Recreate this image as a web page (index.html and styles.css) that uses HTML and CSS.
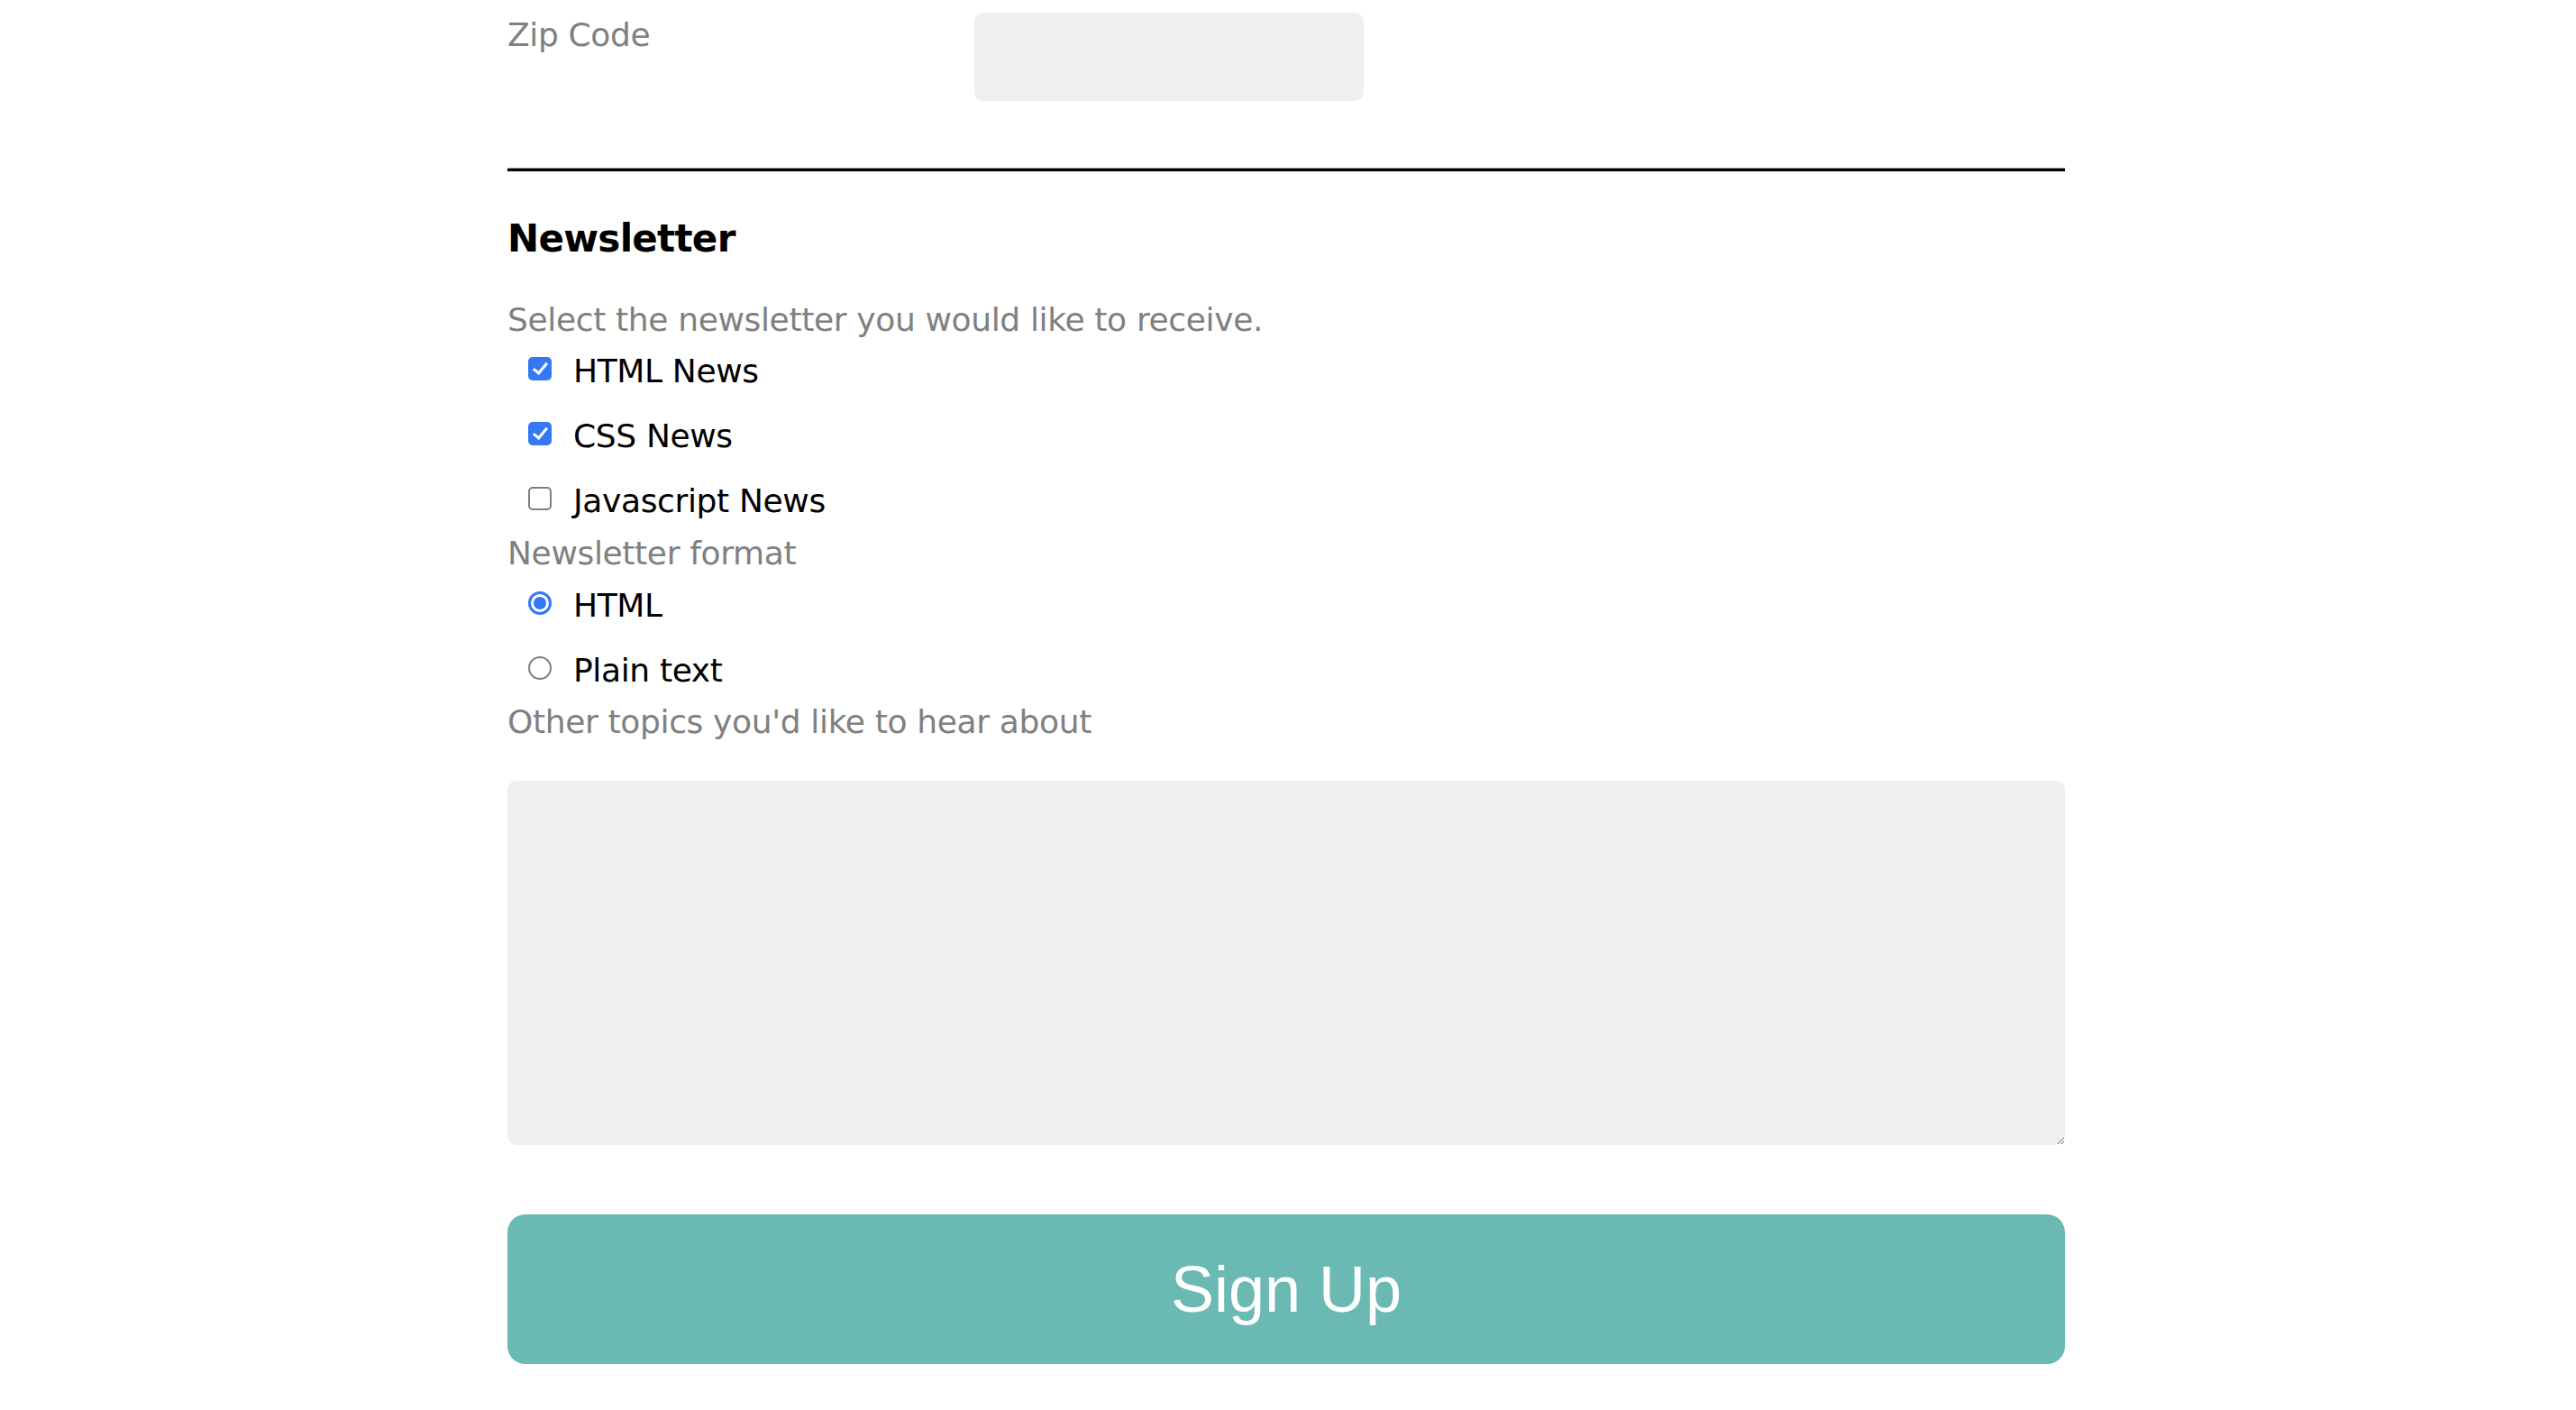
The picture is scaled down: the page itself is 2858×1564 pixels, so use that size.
FILE: index.html
```html
<!DOCTYPE html>
<html lang="en">
<head>
<meta charset="utf-8">
<title>Newsletter Sign Up</title>
<link rel="stylesheet" href="styles.css">
</head>
<body>
<form class="form">
  <div class="zip-row">
    <label class="field-label zip-label" for="zip">Zip Code</label>
    <input class="text-input" type="text" id="zip" name="zip">
  </div>
  <hr class="divider">
  <h3 class="section-title">Newsletter</h3>
  <p class="field-label select-label">Select the newsletter you would like to receive.</p>
  <div class="options">
    <label class="option"><input class="check" type="checkbox" checked><span>HTML News</span></label>
    <label class="option"><input class="check" type="checkbox" checked><span>CSS News</span></label>
    <label class="option"><input class="check" type="checkbox"><span>Javascript News</span></label>
  </div>
  <p class="field-label format-label">Newsletter format</p>
  <div class="options radios">
    <label class="option"><input class="radio" type="radio" name="format" checked><span>HTML</span></label>
    <label class="option"><input class="radio" type="radio" name="format"><span>Plain text</span></label>
  </div>
  <label class="field-label topics-label" for="topics">Other topics you'd like to hear about</label>
  <textarea class="topics" id="topics"></textarea>
  <button class="submit" type="button">Sign Up</button>
</form>
</body>
</html>
```
FILE: styles.css
```css
html, body {
  margin: 0;
  padding: 0;
  background: #ffffff;
}

body {
  font-family: "DejaVu Sans", Verdana, sans-serif;
  font-size: 36px;
  line-height: 42px;
  letter-spacing: -0.35px;
  color: #000;
  padding-right: 4px;
}

.form {
  width: 1728px;
  margin: 0 auto;
  padding-top: 14px;
  display: flex;
  flex-direction: column;
  padding-bottom: 60px;
}

.field-label {
  color: #808080;
  margin: 0;
  display: block;
}

.zip-row {
  display: flex;
  align-items: flex-start;
}

.zip-label {
  width: 518px;
  margin-top: 4px;
  flex: none;
}

.text-input {
  width: 432px;
  height: 98px;
  box-sizing: border-box;
  border: none;
  border-radius: 10px;
  background: #eeeff1;
  padding: 0 16px;
  font: inherit;
  margin: 0;
}

.divider {
  margin: 74px 0 0;
  border: 0;
  border-top: 1px solid #9a9a9a;
  border-bottom: 1px solid #ececec;
  height: 3px;
  background: #000;
  width: 100%;
}

.section-title {
  margin: 49px 0 0;
  font-size: 42px;
  line-height: 49px;
  font-weight: bold;
  letter-spacing: -0.7px;
}

.select-label {
  margin-top: 45px;
}

.options {
  display: flex;
  flex-direction: column;
  gap: 30px;
  margin-top: 15px;
}

.radios {
  margin-top: 16px;
}

.format-label {
  margin-top: 16px;
}

.topics-label {
  margin-top: 15px;
}

.option {
  display: flex;
  align-items: flex-start;
  height: 42px;
}

.check,
.radio {
  appearance: none;
  -webkit-appearance: none;
  width: 26px;
  height: 26px;
  margin: 5px 24px 0 23px;
  box-sizing: border-box;
  flex: none;
  position: relative;
  background: #fff;
}

.check {
  border: 2px solid #7f7f7f;
  border-radius: 5px;
}

.check:checked {
  border: none;
  background: #3478f6;
}

.check:checked::after {
  content: "";
  position: absolute;
  left: 9px;
  top: 3px;
  width: 6px;
  height: 13px;
  border-right: 3.5px solid #fff;
  border-bottom: 3.5px solid #fff;
  transform: rotate(40deg);
}

.radio {
  border: 2px solid #7f7f7f;
  border-radius: 50%;
}

.radio:checked {
  border: 3px solid #3478f6;
}

.radio:checked::after {
  content: "";
  position: absolute;
  left: 3px;
  top: 3px;
  width: 14px;
  height: 14px;
  border-radius: 50%;
  background: #3478f6;
}

.topics {
  margin-top: 44px;
  width: 100%;
  height: 404px;
  box-sizing: border-box;
  border: none;
  border-radius: 10px;
  background: #eeeff1;
  font: inherit;
  padding: 16px;
  display: block;
}

.submit {
  margin-top: 77px;
  width: 100%;
  height: 166px;
  border: none;
  border-radius: 20px;
  background: #6ab9b3;
  color: #fff;
  font-family: "Liberation Sans", Arial, sans-serif;
  font-size: 72px;
  letter-spacing: 0;
  cursor: pointer;
}
```
